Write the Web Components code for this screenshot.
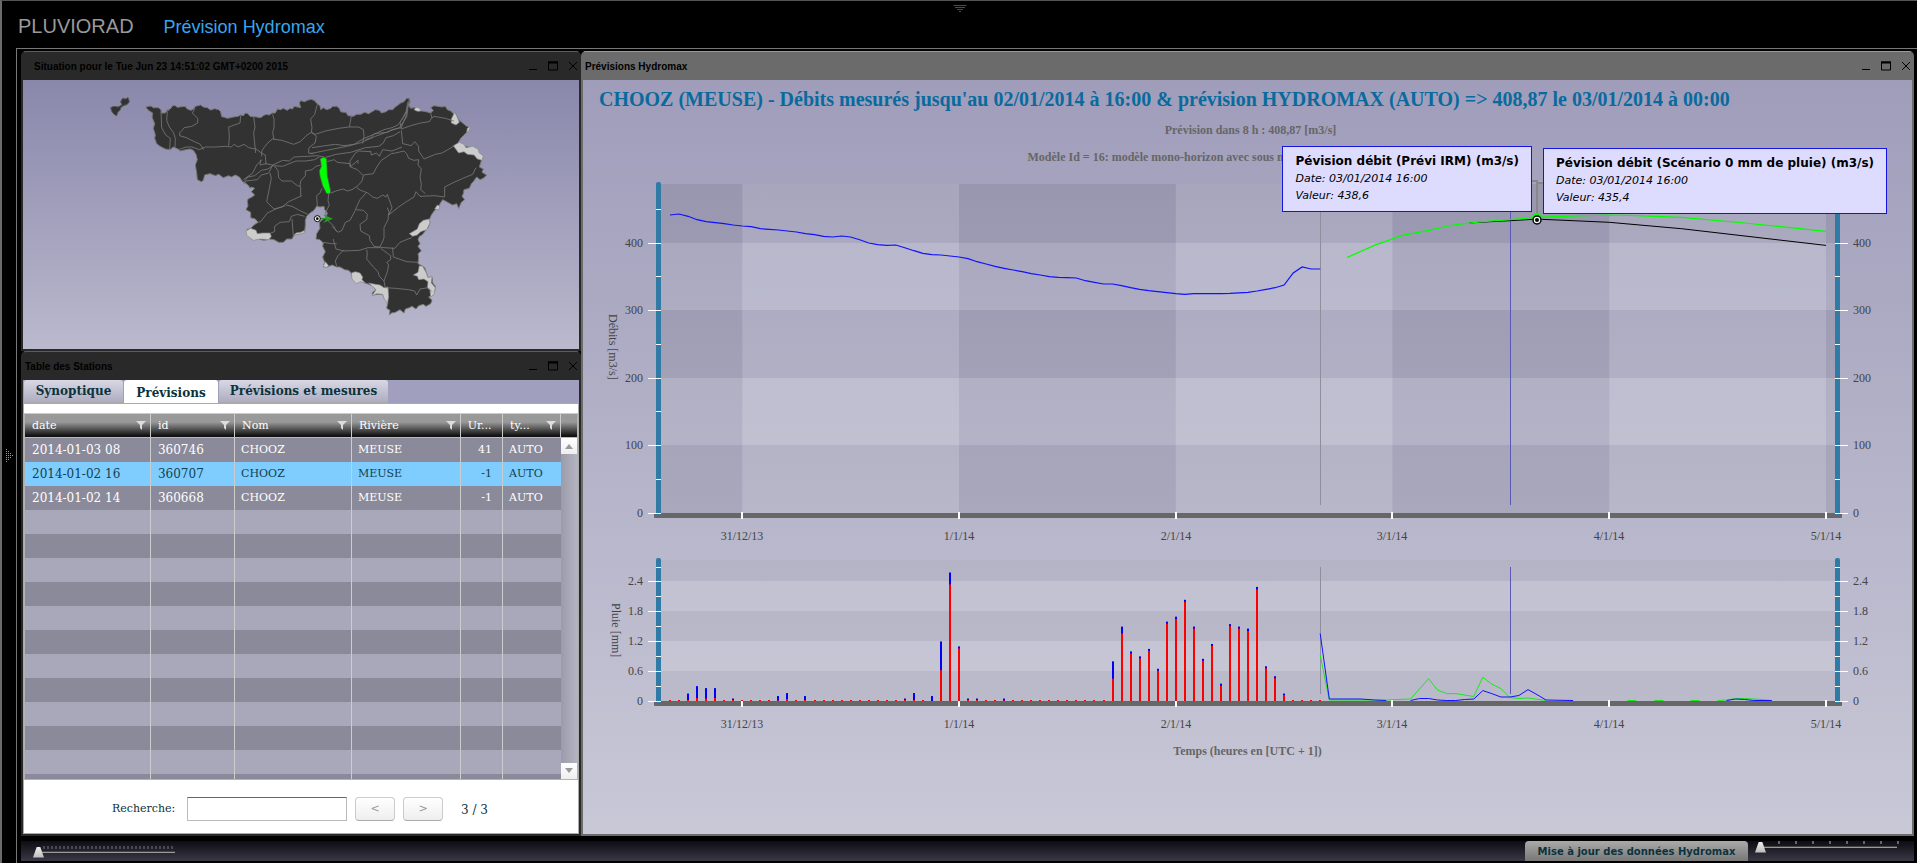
<!DOCTYPE html>
<html lang="fr">
<head>
<meta charset="utf-8">
<title>PLUVIORAD</title>
<style>
html, body { margin: 0; height: 100%; background: #000; }
body { font-family: "Liberation Sans", Arial, sans-serif; }
</style>
</head>
<body>
<pluvio-app></pluvio-app>

<template id="t-app">
<style>
:host { display: grid; grid-template: 47px 1fr / 14px 1fr; height: 100vh; min-height: 640px; box-sizing: border-box;
  border-top: 1px solid #555; border-left: 2px solid #6a6a6a; background: #000; }
header { grid-column: 1 / 3; position: relative; display: flex; align-items: baseline; gap: 30px; padding: 13px 0 0 16px; }
h1 { margin: 0; font-size: 20px; line-height: 24px; font-weight: normal; color: #999; }
header a { font-size: 18px; line-height: 24px; color: #38a6ee; text-decoration: none; }
.pull { position: absolute; top: 4px; left: 50%; transform: translateX(-50%); }
.grip { display: grid; place-items: center; }
main { display: grid; grid-template: minmax(0, 1fr) 20px / minmax(0, 1fr); row-gap: 5px;
  border-left: 1px solid #777; border-top: 1px solid #777; padding: 2px 3px 2px 4px; min-height: 0; }
.desk { display: grid; grid-template: 300fr 485fr / 560fr 1333fr; min-height: 0; }
hydro-window { min-width: 0; min-height: 0; }
.wide { grid-column: 2; grid-row: 1 / 3; }
</style>
<header>
  <h1>PLUVIORAD</h1>
  <a href="#hydromax">Prévision Hydromax</a>
  <dot-grip class="pull" dir="down"></dot-grip>
</header>
<div class="grip"><dot-grip dir="right"></dot-grip></div>
<main>
  <div class="desk">
    <hydro-window class="indent"><span slot="title">Situation pour le Tue Jun 23 14:51:02 GMT+0200 2015</span><basin-map></basin-map></hydro-window>
    <hydro-window class="wide" active><span slot="title">Prévisions Hydromax</span><flow-panel></flow-panel></hydro-window>
    <hydro-window><span slot="title">Table des Stations</span><station-panel></station-panel></hydro-window>
  </div>
  <status-bar></status-bar>
</main>
</template>

<template id="t-window">
<style>
:host { display: flex; flex-direction: column; box-sizing: border-box; background: #292929; border: 2px solid #292929;
  border-top: 1px solid #5c5c5c; border-radius: 5px 5px 0 0; color: #000; }
:host([active]) { background: #6b6b6b; border-color: #6b6b6b; border-top-color: #999; }
.bar { display: flex; align-items: center; flex: 0 0 28px; padding-left: 2px; font-size: 10px; font-weight: bold; }
:host(.indent) .bar { padding-left: 11px; }
.bar span { flex: 1; }
button { all: unset; display: block; width: 10px; height: 10px; margin-left: 10px; }
button:last-child { margin-right: 1px; }
svg { display: block; fill: none; stroke: #000; }
.body { flex: 1; min-height: 0; display: grid; }
</style>
<div class="bar"><span><slot name="title"></slot></span>
  <button aria-label="Réduire"><svg width="10" height="10"><path d="M1 8.500h8"/></svg></button>
  <button aria-label="Agrandir"><svg width="10" height="10"><path d="M.5 1v8h9V1M0 1h10" stroke-width="1"/><path d="M0 1.500h10" stroke-width="2"/></svg></button>
  <button aria-label="Fermer"><svg width="10" height="10"><path d="M1 1l8 8M9 1L1 9"/></svg></button>
</div>
<div class="body"><slot></slot></div>
</template>

<template id="t-map">
<style>
:host { display: block; background: linear-gradient(#8987ab, #bab9cd); overflow: hidden; }
svg { display: block; width: 100%; height: 100%; }
</style>
<svg viewBox="-201 -15 1668 807" role="img" aria-label="Carte des bassins">
<g fill="#323232" stroke="#777" stroke-width="3" stroke-linejoin="round">
<path d="M62 68 72 64 84 66 96 60 92 50 98 40 106 42 114 38 118 50 112 58 100 62 92 68 90 76 84 80 80 92 72 88 66 80z" stroke="#555"/>
<path d="M168 65 183 63 190 68 205 68 213 74 214 84 226 84 232 75 240 72 248 62 256 62 262 67 276 65 285 64 292 72 303 76 311 72 316 64 332 60 340 66 352 68 362 75 374 71 386 74 392 80 395 95 404 97 412 100 430 96 444 94 452 90 460 92 466 84 474 86 480 94 492 95 500 96 512 98 520 92 528 88 538 90 546 84 556 84 562 72 572 74 580 70 592 76 600 70 608 72 612 64 622 66 632 68 628 54 632 47 644 50 652 46 664 43 674 47 680 55 690 62 692 74 700 68 710 74 722 70 728 64 740 64 748 70 752 80 760 82 768 82 774 92 790 94 800 88 812 88 824 82 836 86 846 80 856 74 868 76 874 84 888 80 896 74 908 74 916 66 924 60 932 54 942 50 950 40 958 40 960 50 956 60 962 70 972 68 985 70 995 78 1008 80 1022 84 1030 76 1022 68 1032 62 1044 64 1056 66 1066 64 1072 74 1082 78 1090 86 1096 84 1106 104 1118 114 1130 124 1136 126 1132 140 1120 152 1112 160 1104 174 1120 182 1150 190 1176 220 1172 234 1168 246 1180 252 1176 262 1190 270 1180 280 1170 284 1160 276 1150 290 1144 296 1138 310 1122 314 1120 326 1116 334 1124 344 1114 352 1106 370 1100 356 1088 360 1080 356 1066 348 1058 344 1050 356 1044 370 1034 376 1024 390 1018 404 1020 414 1014 428 1004 440 996 450 988 454 984 464 990 476 984 484 994 498 984 506 986 516 984 536 992 540 1004 548 1010 566 1014 578 1026 576 1028 594 1036 604 1034 618 1028 630 1016 636 1026 646 1022 656 1008 664 1000 658 986 662 978 672 966 664 958 668 946 672 942 684 930 674 916 682 904 684 898 690 900 676 890 670 894 650 884 640 878 628 862 628 850 630 846 624 858 614 846 602 832 596 824 594 818 590 800 588 786 574 782 562 776 556 764 554 750 546 740 546 726 540 712 546 700 546 704 532 698 516 706 500 698 484 700 474 690 464 678 462 680 446 690 430 688 412 700 402 708 398 712 384 704 374 702 364 690 366 680 364 672 376 660 384 650 394 646 406 646 420 644 440 630 446 612 450 606 462 590 462 580 472 566 472 552 464 540 462 522 466 506 462 490 464 478 454 470 450 478 440 470 434 482 430 492 420 504 412 496 402 482 398 482 382 468 374 474 362 472 350 474 342 486 336 494 330 484 320 494 310 484 306 480 310 476 302 466 294 458 290 448 276 436 270 424 276 416 272 400 278 386 268 376 272 360 266 344 270 340 286 334 290 322 284 320 264 316 240 322 224 318 208 310 196 300 192 288 194 270 198 264 192 250 186 240 194 226 192 210 184 200 176 194 160 196 150 190 130 194 116 186 96 188 84 178 78 170 70z"/>
</g>
<g fill="#ccc" stroke="#888" stroke-width="2" stroke-linejoin="round">
<path d="M972 74l6-7 10 2 6 9-12 1z"/><path d="M1084 102l10-20 6 10 8 20-10 8-14-6z"/><path d="M1130 142l2-12 10-6-6 14z"/>
<path d="M1090 182l18-10 14 6 6 10 20-4 16 8 4 12 12 8-4 14-14-4-10-12-20-2-10-8-16 4z"/>
<path d="M958 446l24-14 6-16 12-10 18-4 2 12-10 20-18 6-10 10-14 4z"/><path d="M1034 372l8-12 8 4-4 10z"/>
<path d="M468 438l14-8 16 6 4 10 16-2 22 0 4 10-8 10-24-2-22 4-10-8-10-6z"/><path d="M612 450l6-6 14-2 12-6-2 8-16 4z"/>
<path d="M700 544l6-14 10 12-8 6z"/><path d="M784 564l12-4 14 4 8 12-2 8 10 10-14-4-14 6-12-14z"/>
<path d="M836 594l20 4 14 2 12 8 12-2 2 30-4 20-10-16-4-12-18-2-14 6 12-18z"/>
<path d="M970 570l14-8 4-20 10 2 10 18 6 16 12-4-2 20 12 14-4 20-10 8-2-20-8-8 2-18-12-8-16 2-4-10z"/>
</g>
<g fill="none" stroke="#777" stroke-width="2.500" stroke-linejoin="round">
<path d="M213 80l2 48 12 22 14 10-2 32M246 66l-14 14-2 26 8 20 12 16 6 18-1 26M315 70l-8 14 16 16 0 14-18 10-22 4-14 16 0 8 20 6 20 10 22 10 10 16"/>
<path d="M266 194l22-8 18 0 22 8 18-8 30 0 30-2 18 2 8-8 12 8 18-8 14 10 22 4 16 12 12 6 2 28"/>
<path d="M452 92l-2 22-34 12 2 30-2 26M491 96l4 30-4 18 6 60M548 88l4 14 0 26-4 14 4 22"/>
<path d="M515 214l0-16 16-22 16-14 28 4 36 12 20-8 20-20 14-8 14 12 -4 20-18 14-2 16 16 2"/>
<path d="M682 58l-8 30-12 14 4 26-2 14 12 6 30-10 40-8 30-4 30 0 14 8 2 20-4 22"/>
<path d="M784 92l-4 24-2 10M666 188l40-6 30-4 26 4 30-4 30-18 30-12 30-14 24-6 18-8 10-14 14-26 6-30"/>
<path d="M660 206l50-10 60-12 40-10 46-20 38-14 34-12 22-32 8-56M930 140l-20 12-22 6-8 16-14 10-40 4-44 14-44 6-34 10"/>
<path d="M826 164l18-6 8-12 40-4 14-8 28-6 14-36 6-34M934 132l-4-20 10-14 10-20M934 132l28-10 30-8 26-4 6-10 8-6 34 6 26 8"/>
<path d="M1022 84l4 16M934 136l4 40 26 6 10-12 12 14 0 14 16 24 34-14 20-4 38-22"/>
<path d="M512 224l-2 16 18-4 20 4 30-14 20 2 14-12 40-2 30-2 20 4M550 240l-16 12-20 4-20 16-20 4-12 14M460 284l20-14 8-6 12-24 16-16M548 240l-12 24-22 6-12 14-34 4-8 10"/>
<path d="M548 242l30 2 40-16 30 0 26-4 14-8M554 244l10 12 2 22 10 10 28 0 18 14 8 2 2-16 14-16 0-14 20-4 12-10 14-4"/>
<path d="M540 264l4 16-10 50-4 20 22 22 24-6 20-16 40-18M632 304l0 28M588 360l18 4 22 12 30 14M586 362l-24 8-30 14-20 26-10 2M554 440l0-16 16-12 28-2 6-16 18-6 22 6M606 402l4 50M554 440l-12 4"/>
<path d="M682 366l-2-34 10-8 6-14M716 324l-2 24 4 12-12 24 2 18 22 20 10 18"/>
<path d="M722 324l22-8 16-4 12 6 14-4 18-12 12-14 4-16-18-18-20-8-2-10 -38-4-10-8-20 6M804 236l0 -10-24 20 0-18 16-24 10-6 36 2"/>
<path d="M820 270l30-4 10-20 14-20 30-20 12-2 26-6 8 8 6 14 16 6 14-2-2 16 10 12-4 24 4 22 -2 16 14 12"/>
<path d="M842 198l2 12 16-6 8 10 10-20 28 4 30-12M800 308l12 8 22 8 14 12 14 4 16-10 10 6 4-8 14 40 -10 22 30-24 20-14 26-16 6-16 12 14 44-2 30 4 0-30 28-14 36-16 20-8 10-20"/>
<path d="M828 324l-18 20-14 30 24 2 12 12-2 16-20 14 2 20 26 14 2 14 12 18 30 4 32 2 16-18 24-10 12-4"/>
<path d="M796 376l-16 30-14 6-10 24-12 6-18-18M896 384l-2 20-12 24 0 30-4 12-10 18-34 0-26 8-46 2-24-6-6-20-2-10M898 384l-6-16"/>
<path d="M762 494l-18 18-8 16 4 16M700 472l24 4 16 0M830 494l2 12-2 16 20 24 14 14 4 14 14 14 10-28 4-20-6-8 12-8 0-12-30-22"/>
<path d="M908 488l2 28 40 14 34 2M882 588l4 20 30 2 40 4 18 4 6 12 10-18 24-4 12 12"/>
</g>
<path d="M690 222l12-6 8 6 2 50 10 46-2 8-10 0-12-24-8-28-2-16 6-14-2-16z" fill="#0f0" stroke="#555" stroke-width="2"/>
<path d="M690 401h24M706 393l18 8-18 8 6-8z" stroke="#2a9a2a" stroke-width="4" fill="#2a9a2a"/>
<circle cx="682" cy="401" r="9" fill="#fff" stroke="#000" stroke-width="3"/><circle cx="682" cy="401" r="4"/>
</svg>
</template>

<template id="t-station">
<style>
:host { display: flex; flex-direction: column; min-height: 0; background: #a09fbd; color: #0b333c;
  font: 11px/16px "DejaVu Serif", Georgia, serif; }
nav { display: flex; flex: 0 0 23px; padding-left: 1px; gap: 1px; }
nav button { font: bold 12px/16px "DejaVu Serif", Georgia, serif; color: #0b333c; border: 0; padding: 3px 0 4px; width: 99px;
  background: linear-gradient(#d9d8e4, #acaac0); border-radius: 3px 3px 0 0; box-shadow: inset 0 -1px #aaa; text-align: center; white-space: nowrap; }
nav button.on { background: #fff; width: 94px; box-shadow: none; padding: 5px 0 2px; }
nav button.long { width: 169px; }
.sheet { flex: 1; min-height: 0; display: flex; flex-direction: column; background: #fff; border: 1px solid #aaa; padding-top: 9px; }
.grid { flex: 1; min-height: 0; display: grid; grid-template: 24px minmax(0, 1fr) / minmax(0, 1fr) 16px; border: 1px solid #b3b3b3; border-top-color: #ccc; }
.clip { grid-row: 1 / 3; overflow: hidden; }
table { width: 100%; table-layout: fixed; border-collapse: separate; border-spacing: 0; color: #fff; }
th { height: 24px; box-sizing: border-box; padding: 0 4px 0 7px; text-align: left; font-weight: normal;
  background: linear-gradient(#999 0 35%, #111 95%); border-right: 1px solid #ccc; border-bottom: 1px solid #bbb; overflow: hidden; white-space: nowrap; }
th div { display: flex; justify-content: space-between; align-items: center; }
th svg { fill: #ddd; flex: none; }
td { height: 24px; box-sizing: border-box; padding: 0 7px 0 6px; border-right: 1px solid #ccc; background: #8b8a9a; white-space: nowrap; overflow: hidden; }
td:last-child { border-right: 0; }
tr:nth-child(even) td { background: #a9a8ba; }
tr.sel td { background: #7fcdff !important; color: #12404f; }
td.n { font-size: 12px; padding-left: 7px; }
td:nth-child(5) { text-align: right; padding-right: 10px; }
.corner { background: linear-gradient(#999 0 35%, #111 95%); border-bottom: 1px solid #bbb; }
.scroll { display: flex; flex-direction: column; justify-content: space-between; background: linear-gradient(90deg, #9c9baa, #b4b3c2); }
.scroll button { all: unset; height: 16px; display: grid; place-items: center; background: linear-gradient(#fff, #eee); border: 0; }
.scroll svg { fill: #999; }
footer { flex: 0 0 53px; box-sizing: border-box; display: flex; align-items: center; padding: 5px 0 0 88px; }
label { width: 75px; }
input { width: 160px; height: 24px; box-sizing: border-box; border: 1px solid #bbb; border-top-color: #666; background: #fff; margin: 0 8px 0 0; padding: 0 4px; }
footer button { width: 40px; height: 24px; margin-right: 8px; padding: 0; border: 1px solid #ccc; border-bottom-color: #aaa; border-radius: 4px;
  background: linear-gradient(#fff, #eee); color: #999; font: 11px/16px "DejaVu Serif", serif; }
output { margin-left: 10px; padding-top: 2px; font-size: 12px; }
</style>
<nav><button>Synoptique</button><button class="on">Prévisions</button><button class="long">Prévisions et mesures</button></nav>
<div class="sheet">
  <div class="grid">
    <div class="clip"><table>
      <colgroup><col style="width:23.500%"><col style="width:15.700%"><col style="width:21.800%"><col style="width:20.300%"><col style="width:7.900%"><col></colgroup>
      <thead><tr></tr></thead><tbody></tbody>
    </table></div>
    <div class="corner"></div>
    <div class="scroll">
      <button aria-label="Monter"><svg width="8" height="6"><path d="M4 1l4 5H0z"/></svg></button>
      <button aria-label="Descendre"><svg width="8" height="6"><path d="M4 5L8 0H0z"/></svg></button>
    </div>
  </div>
  <footer><label for="q">Recherche:</label><input id="q" type="text"><button>&lt;</button><button>&gt;</button><output>3 / 3</output></footer>
</div>
</template>

<template id="t-flow">
<style>
:host { display: block; position: relative; background: linear-gradient(#9f9dba, #c9c8d7); overflow: hidden;
  font-family: "Liberation Serif", "Times New Roman", serif; }
h2 { margin: 0; padding: 7px 0 0 16px; font-size: 20px; line-height: 24px; color: #0a6a9e; white-space: nowrap; }
p { margin: 11px auto 0; padding-left: 6px; text-align: center; font-size: 12px; line-height: 16px; font-weight: bold; color: #666; white-space: nowrap; }
p.model { width: 446px; text-align: left; }
svg { display: block; width: 100%; height: 605px; margin-top: 5px; overflow: visible; }
svg text { font-size: 12px; fill: #444; }
svg text.t { font-weight: bold; fill: #666; }
chart-tip { position: absolute; }
chart-tip.irm { top: 66px; right: calc(100% - var(--mx) + 5px); }
chart-tip.dry { top: 68px; left: calc(var(--mx) + 6px); }
</style>
<h2>CHOOZ (MEUSE) - Débits mesurés jusqu'au 02/01/2014 à 16:00 &amp; prévision HYDROMAX (AUTO) =&gt; 408,87 le 03/01/2014 à 00:00</h2>
<p>Prévision dans 8 h : 408,87 [m3/s]</p>
<p class="model">Modèle Id = 16: modèle mono-horizon avec sous m</p>
<svg></svg>
<chart-tip class="irm" value="438,6">Pévision débit (Prévi IRM) (m3/s)</chart-tip>
<chart-tip class="dry" value="435,4">Pévision débit (Scénario 0 mm de pluie) (m3/s)</chart-tip>
</template>

<template id="t-tip">
<style>
:host { display: block; box-sizing: border-box; border: 1px solid #1414e0; background: #dddcff; color: #000; padding: 6px 12px 7px;
  font: 12px/17px "DejaVu Sans", Verdana, sans-serif; white-space: nowrap; }
b, i { display: block; }
i { font-size: 11px; }
</style>
<b><slot></slot></b><i>Date: 03/01/2014 16:00</i><i class="v"></i>
</template>

<template id="t-status">
<style>
:host { display: flex; align-items: flex-start; justify-content: space-between; background: linear-gradient(#0e0d15, #393844); }
.right { display: flex; gap: 7px; }
button { height: 20px; width: 223px; border: 0; border-radius: 4px 4px 0 0; background: linear-gradient(#aaa, #777); color: #0b333c; padding: 1px 0 0;
  font: bold 10px/19px "DejaVu Sans", Verdana, sans-serif; white-space: nowrap; }
input { appearance: none; -webkit-appearance: none; margin: 0; height: 12px; background: none; }
#zoom { width: 144px; margin: 5px 0 0 12px;
  background: repeating-linear-gradient(90deg, #4a4a52 0 2px, transparent 2px 4px) 10px 0 / 132px 3px no-repeat,
    linear-gradient(#444 0 1px, #999 1px 3px) 8px 5px / 134px 2px no-repeat; }
#time { width: 145px; margin-right: 14px;
  background: repeating-linear-gradient(90deg, transparent 0 15px, #666 15px 17px) 8px 0 / 136px 3px no-repeat,
    linear-gradient(#444 0 1px, #999 1px 3px) 8px 5px / 134px 2px no-repeat; }
input::-webkit-slider-thumb { -webkit-appearance: none; width: 11px; height: 11px; border: 0; background: linear-gradient(#eee, #bbb);
  clip-path: polygon(35% 0, 65% 0, 100% 100%, 0 100%); }
</style>
<input id="zoom" type="range" value="0" aria-label="Zoom">
<div class="right"><button>Mise à jour des données Hydromax</button><input id="time" type="range" value="0" aria-label="Temps"></div>
</template>

<script>
class Base extends HTMLElement {
  constructor() {
    super();
    const id = this.constructor.template;
    this.attachShadow({ mode: "open" });
    if (id) this.shadowRoot.append(document.getElementById(id).content.cloneNode(true));
  }
}

class DotGrip extends Base {
  connectedCallback() {
    const down = this.getAttribute("dir") === "down";
    let dots = "";
    for (let r = 0; r < 4; r++)
      for (let c = r; c < 7 - r; c++) {
        const [x, y] = down ? [c * 2, r * 2] : [r * 2, c * 2];
        dots += `<rect x="${x}" y="${y}" width="1" height="1"/>`;
      }
    this.shadowRoot.innerHTML = `<style>:host{display:block}svg{display:block;fill:#999}</style>
      <svg width="${down ? 13 : 7}" height="${down ? 7 : 13}">${dots}</svg>`;
  }
}

class PluvioApp extends Base { static template = "t-app"; }
class HydroWindow extends Base { static template = "t-window"; }
class BasinMap extends Base { static template = "t-map"; }
class StatusBar extends Base { static template = "t-status"; }

class ChartTip extends Base {
  static template = "t-tip";
  connectedCallback() { this.shadowRoot.querySelector(".v").textContent = "Valeur: " + this.getAttribute("value"); }
}

class StationPanel extends Base {
  static template = "t-station";
  connectedCallback() {
    const funnel = `<svg width="10" height="9"><path d="M0 0h10L6 4v5L4 7V4z"/></svg>`;
    const heads = ["date", "id", "Nom", "Rivière", "Ur...", "ty..."];
    this.shadowRoot.querySelector("thead tr").innerHTML =
      heads.map((h, i) => `<th scope="col"><div>${h}${i === 4 ? "" : funnel}</div></th>`).join("");
    const rows = [["2014-01-03 08", "360746", 41], ["2014-01-02 16", "360707", -1], ["2014-01-02 14", "360668", -1]];
    let html = rows.map(([d, id, u], i) =>
      `<tr${i === 1 ? ' class="sel"' : ""}><td class="n">${d}</td><td class="n">${id}</td><td>CHOOZ</td><td>MEUSE</td><td>${u}</td><td>AUTO</td></tr>`).join("");
    for (let i = 0; i < 60; i++) html += "<tr><td></td><td></td><td></td><td></td><td></td><td></td></tr>";
    this.shadowRoot.querySelector("tbody").innerHTML = html;
  }
}

/* Hours are counted from 31/12/13 00:00. */
const MEASURED = [441.5,443,439.5,434.5,431.6,430.1,428.6,426.6,425.2,424.2,421.2,420.2,419.2,417.8,416.3,413.8,412.3,409.9,408.9,410.4,408.9,404.9,400,397.5,396.5,397,393.1,388.6,384.7,382.7,382.2,380.7,379.2,376.8,372.3,368.9,365.4,362.5,360,357.5,354.6,352.6,350.1,349.1,348.6,348.1,344.2,341.7,339.2,339.2,336.8,333.8,331.3,329.4,327.9,326.4,324.9,323.9,324.9,324.9,324.9,324.9,325.4,326.2,326.9,328.9,331.3,333.8,337.8,355.5,364.4,361.5,361.5].map((v, i) => [i - 8, v]);
const IRM = [[67,378.7],[70,396.5],[73,410.8],[76,418.7],[78.7,426.6],[80,428.6],[82,431.6],[85,434.5],[88,438],[90,439],[96,441.5],[99,440.5],[104,438],[111,429.6],[120,417.3]];
const DRY = [[80.5,429.6],[82,431],[85,433],[88,435.4],[92,433],[96,430.6],[104,421.2],[120,396.5]];
const RAIN = { "-6":[.15,.02],"-5":[.3,.06],"-4":[.26,.05],"-3":[.26,.06],"-1":[.05,.02],4:[.1,.01],5:[.16,.04],7:[.1,.02],18:[.05,.02],19:[.16,.02],21:[.1,0],22:[1.2,.62],23:[2.59,2.35],24:[1.1,1.06],25:[.05,.02],26:[.05,.02],29:[.05,.01],41:[.8,.45],42:[1.5,1.36],43:[1,.96],44:[.9,.86],45:[1.05,1.01],46:[.65,.61],47:[1.6,1.56],48:[1.7,1.65],49:[2.04,2],50:[1.5,1.46],51:[.85,.81],52:[1.15,1.11],53:[.35,.31],54:[1.55,1.51],55:[1.5,1.46],56:[1.46,1.41],57:[2.3,2.25],58:[.7,.66],59:[.5,.46],60:[.15,.12] };
const RAIN_BLUE = [[[64,1.36],[65,.04],[68.5,.04],[70,.02],[71.3,.01]],
  [[74,.01],[75,.05],[76,.05],[77,.02],[78,.01],[79,.01],[80,.03],[81,.04],[82,.21],[83,.15],[84,.08],[85,.08],[86,.11],[87,.23],[88,.13],[89,.02],[92,.01]],
  [[109,.01],[110,.04],[111,.03],[112,.01],[114,.01]]];
const RAIN_GREEN = [[[64,.93],[65,.02],[71.3,.02],[72.6,.03],[74,.04],[76,.45],[77,.22],[78,.15],[79,.15],[81,.09],[82,.48],[83,.34],[84,.25],[85,.07],[86,.05],[87,.06],[89,.01]],
  [[98,.01],[99,.01]],[[101,.01],[102,.01]],[[105,.01],[106,.01]],[[108,.01],[109,.02],[110,.05],[111,.05],[113,.03],[114,.01]]];

class FlowPanel extends Base {
  static template = "t-flow";
  connectedCallback() {
    this.draw();
    new ResizeObserver(() => this.draw()).observe(this);
  }
  draw() {
    const W = Math.max(this.clientWidth, 500), L = 78, R = W - 77, last = R + 5;
    const x = t => L + (t + 9) * (R - L) / 130;
    const days = [[0, "31/12/13"], [24, "1/1/14"], [48, "2/1/14"], [72, "3/1/14"], [96, "4/1/14"], [120, "5/1/14"]];
    const rect = (a, b, w, h, f, o = "") => `<rect x="${a}" y="${b}" width="${w}" height="${h}" fill="${f}" ${o}/>`;
    const line = (pts, y, c, o = "") => `<polyline fill="none" stroke="${c}" ${o} points="${pts.map(([t, v]) => x(t).toFixed(1) + "," + y(v).toFixed(1)).join(" ")}"/>`;
    let s = "";
    const LIGHT = "rgba(255,255,255,.1)", DARK = "rgba(0,0,0,.03)";

    const axes = (top, zero, y, step, max, fmt) => {
      let o = "";
      for (let v = 0, i = 0; v < max; v += step, i++) {
        const b = Math.floor(y(v)), t = Math.max(top, Math.floor(y(v + step)));
        o += rect(L, Math.min(b, t), last - L, Math.abs(b - t), i % 2 ? LIGHT : DARK);
      }
      o += rect(L - 7, zero, R - L + 14, 5, "#676767", 'rx="1"');
      for (const bx of [L - 5, R]) o += rect(bx, top - 2, 5, zero - top + 4, "#2f7ba5", 'rx="2"');
      for (let v = 0, i = 0; v < max; v += step / 2, i++) {
        const yy = Math.floor(y(v)), major = i % 2 === 0;
        o += rect(major ? L - 13 : L - 5, yy, major ? 13 : 5, 1, "#fff") + rect(R, yy, major ? 13 : 5, 1, "#fff");
        if (major) o += `<text x="${L - 18}" y="${yy + 4}" text-anchor="end">${fmt(v)}</text><text x="${R + 18}" y="${yy + 4}">${fmt(v)}</text>`;
      }
      for (const [t, label] of days)
        o += rect(Math.round(x(t)) - 1, zero - 1, 2, 7, "#fff") + `<text x="${Math.round(x(t))}" y="${zero + 27}" text-anchor="middle">${label}</text>`;
      return o;
    };

    /* discharge */
    const q = v => 343 - v * .675;
    let prev = -9;
    [0, 24, 48, 72, 96, 120, 131].forEach((t, i) => {
      const a = x(prev), b = t === 131 ? last : x(t);
      s += rect(a, 14, b - a, 329, i % 2 ? LIGHT : "rgba(0,0,0,.04)");
      prev = t;
    });
    s += axes(14, 343, q, 100, 487, v => v);
    s += `<text transform="translate(26 144) rotate(90)">Débits [m3/s]</text>`;

    /* rain */
    const p = v => 531 - v * 49.6;
    s += rect(L, 390, last - L, 141, "rgba(255,255,255,.02)");
    s += axes(390, 531, p, .6, 2.84, v => v < .1 ? "0" : v.toFixed(1));
    s += `<text transform="translate(29 433) rotate(90)">Pluie [mm]</text>`;
    s += `<text class="t" x="${W / 2}" y="585" text-anchor="middle">Temps (heures en [UTC + 1])</text>`;
    for (let t = -8; t <= 64; t++) {
      const [all, red] = RAIN[t] || [.02, .02], bx = Math.round(x(t)) - 1;
      s += rect(bx, p(all), 2, p(0) - p(all), "#00f") + rect(bx, p(red), 2, p(0) - p(red), "#f00");
    }

    /* now and selected hour */
    for (const [t, c] of [[64, "#8f8e9c"], [85, "#5a5ab4"]]) {
      const vx = Math.round(x(t));
      s += rect(vx, 14, 1, 321, c) + rect(vx, 397, 1, 127, c);
    }
    for (const g of RAIN_GREEN) s += line(g, p, "#1be81b");
    for (const b of RAIN_BLUE) s += line(b, p, "#11f");
    s += line(MEASURED, q, "#11f", 'stroke-width="1.200"') + line(DRY, q, "#000") + line(IRM, q, "#0f0", 'stroke-width="1.200"');

    const mx = Math.round(x(88));
    s += `<path d="M${mx - 6} 11h6v34M${mx} 13h6" fill="none" stroke="#888" stroke-width="2"/>`;
    s += `<circle cx="${mx}" cy="48" r="5" fill="#0f0"/><circle cx="${mx}" cy="50" r="4" fill="#fff" stroke="#000" stroke-width="1.500"/><circle cx="${mx}" cy="50" r="2"/>`;
    this.style.setProperty("--mx", mx + "px");
    this.shadowRoot.querySelector("svg").innerHTML = s;
  }
}

customElements.define("dot-grip", DotGrip);
customElements.define("chart-tip", ChartTip);
customElements.define("basin-map", BasinMap);
customElements.define("station-panel", StationPanel);
customElements.define("flow-panel", FlowPanel);
customElements.define("status-bar", StatusBar);
customElements.define("hydro-window", HydroWindow);
customElements.define("pluvio-app", PluvioApp);
</script>
</body>
</html>
